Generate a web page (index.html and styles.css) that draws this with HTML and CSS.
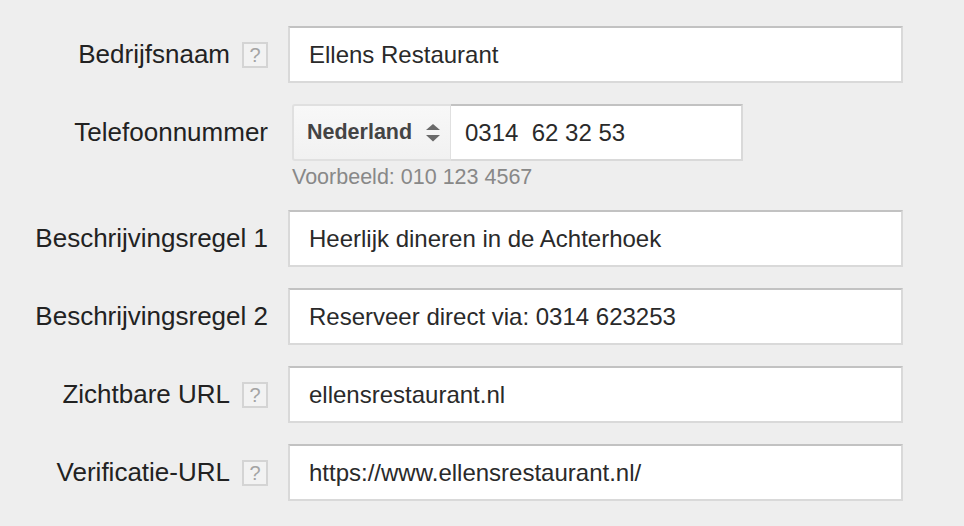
FILE: index.html
```html
<!DOCTYPE html>
<html lang="nl">
<head>
<meta charset="utf-8">
<title>Advertentie-extensie</title>
<link rel="stylesheet" href="styles.css">
</head>
<body>
<div class="form">
  <div class="row">
    <div class="label"><span>Bedrijfsnaam</span><span class="help">?</span></div>
    <div class="field"><div class="input">Ellens Restaurant</div></div>
  </div>
  <div class="row">
    <div class="label"><span>Telefoonnummer</span></div>
    <div class="field">
      <div class="phone">
        <div class="select"><span>Nederland</span>
          <svg class="arrows" width="14" height="18" viewBox="0 0 14 18"><polygon points="0,6 7,0 14,6" fill="#6a6a6a"/><polygon points="0,11 14,11 7,17.5" fill="#6a6a6a"/></svg>
        </div>
        <div class="phone-input">0314  62 32 53</div>
      </div>
      <div class="hint">Voorbeeld: 010 123 4567</div>
    </div>
  </div>
  <div class="row">
    <div class="label"><span>Beschrijvingsregel 1</span></div>
    <div class="field"><div class="input">Heerlijk dineren in de Achterhoek</div></div>
  </div>
  <div class="row">
    <div class="label"><span>Beschrijvingsregel 2</span></div>
    <div class="field"><div class="input">Reserveer direct via: 0314 623253</div></div>
  </div>
  <div class="row">
    <div class="label"><span>Zichtbare URL</span><span class="help">?</span></div>
    <div class="field"><div class="input">ellensrestaurant.nl</div></div>
  </div>
  <div class="row">
    <div class="label"><span>Verificatie-URL</span><span class="help">?</span></div>
    <div class="field"><div class="input">https://www.ellensrestaurant.nl/</div></div>
  </div>
</div>
</body>
</html>
```
FILE: styles.css
```css
html, body {
  margin: 0;
  padding: 0;
  background: #eeeeee;
}
body {
  font-family: "Liberation Sans", Arial, Helvetica, sans-serif;
  color: #222;
}
.form {
  padding-top: 26px;
  display: flex;
  flex-direction: column;
  gap: 21px;
}
.row {
  display: flex;
  align-items: flex-start;
}
.label {
  width: 268px;
  height: 57px;
  display: flex;
  justify-content: flex-end;
  align-items: center;
  gap: 12px;
  font-size: 26px;
  color: #222;
  white-space: nowrap;
}
.help {
  width: 26px;
  height: 26px;
  box-sizing: border-box;
  border: 2px solid #d4d4d4;
  background: #f2f2f2;
  color: #a4a4a4;
  font-size: 20px;
  display: flex;
  align-items: center;
  justify-content: center;
  margin-top: 1px;
}
.field {
  margin-left: 20px;
}
.input {
  width: 615px;
  height: 57px;
  box-sizing: border-box;
  background: #fff;
  border: 2px solid #d9d9d9;
  border-top-color: #c2c2c2;
  padding-left: 19px;
  display: flex;
  align-items: center;
  font-size: 24px;
  color: #2a2a2a;
  white-space: pre;
}
.phone {
  margin-left: 4px;
  display: flex;
  height: 57px;
}
.select {
  width: 159px;
  box-sizing: border-box;
  border: 2px solid #e0e0e0;
  border-right-width: 1px;
  border-radius: 3px 0 0 3px;
  background: linear-gradient(#f8f8f8, #f1f1f1);
  padding: 0 10px 0 13px;
  display: flex;
  align-items: center;
  justify-content: space-between;
  font-weight: bold;
  font-size: 21.5px;
  color: #444;
}
.arrows {
  display: block;
  margin-top: 1px;
}
.phone-input {
  width: 292px;
  box-sizing: border-box;
  background: #fff;
  border: 2px solid #d9d9d9;
  border-top-color: #c2c2c2;
  border-left: 0;
  padding-left: 14px;
  display: flex;
  align-items: center;
  font-size: 24px;
  color: #2a2a2a;
  white-space: pre;
}
.hint {
  margin: 4px 0 0 4px;
  line-height: 24px;
  font-size: 21.5px;
  color: #888;
}
```
